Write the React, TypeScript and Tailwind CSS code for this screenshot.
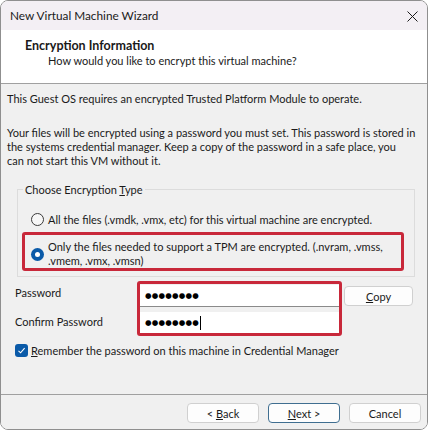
import React from "react";

const font = { fontFamily: 'Lato, "Noto Sans", sans-serif' };

function Radio({ checked }: { checked?: boolean }) {
  return checked ? (
    <span className="w-[13px] h-[13px] shrink-0 rounded-full bg-[#0a5aa8] flex items-center justify-center">
      <span className="w-[5px] h-[5px] rounded-full bg-white" />
    </span>
  ) : (
    <span className="w-[13px] h-[13px] shrink-0 rounded-full border border-[#3a3a3a] bg-[#f7f7f7]" />
  );
}

function Dots({ caret }: { caret?: boolean }) {
  return (
    <div className="flex items-center h-full pl-[5px]">
      <span className="text-[7.5px] tracking-[0.2px] leading-none text-black" style={{ fontFamily: '"DejaVu Sans", sans-serif' }}>
        ●●●●●●●●
      </span>
      {caret && <span className="w-[1px] h-[14px] bg-black ml-[1px]" />}
    </div>
  );
}

function Button({ children, primary }: { children: React.ReactNode; primary?: boolean }) {
  return (
    <button
      className={
        primary
          ? "w-[72px] h-[20px] rounded-[4px] border border-[#3f6e90] bg-[#fdfdfd] text-[11px] leading-none"
          : "w-[72px] h-[20px] rounded-[4px] border border-[#d0d0d0] bg-[#fdfdfd] text-[11px] leading-none"
      }
    >
      {children}
    </button>
  );
}

export default function App() {
  return (
    <div className="w-[428px] h-[430px] bg-white text-[#1a1a1a] text-[11px]" style={font}>
      <div className="w-[428px] h-[430px] rounded-[8px] border border-[#8f8f8f] overflow-hidden flex flex-col">
        {/* title bar */}
        <div className="h-[29px] shrink-0 bg-[#f3eff4] flex items-center justify-between pl-[9px] pr-[9px]">
          <span className="leading-[15px] text-[11.8px]">New Virtual Machine Wizard</span>
          <svg width="11" height="11" viewBox="0 0 11 11" className="mt-[1px]">
            <path d="M0.5 0.5 L10.5 10.5 M10.5 0.5 L0.5 10.5" stroke="#1a1a1a" strokeWidth="1" />
          </svg>
        </div>

        {/* header */}
        <div className="h-[54px] shrink-0 bg-white border-b border-[#a0a0a0] pt-[8px] pl-[24px]">
          <div className="font-bold leading-[15px] text-[12.5px]">Encryption Information</div>
          <div className="leading-[15px] pl-[23px]">How would you like to encrypt this virtual machine?</div>
        </div>

        {/* body */}
        <div className="h-[310px] shrink-0 bg-[#f0f0f0] pl-[6px] pr-[6px] pt-[7px]">
          <div className="leading-[15px] whitespace-nowrap">This Guest OS requires an encrypted Trusted Platform Module to operate.</div>
          <div className="mt-[20px] leading-[14px] whitespace-nowrap">
            Your files will be encrypted using a password you must set. This password is stored in
            <br />
            the systems credential manager. Keep a copy of the password in a safe place, you
            <br />
            can not start this VM without it.
          </div>

          <fieldset className="mt-[14px] ml-[10px] mr-[6px] border border-[#dcdcdc] pb-[5px]">
            <legend className="ml-[5px] px-[2px] leading-[15px]">
              Choose Encryption <span className="underline">T</span>ype
            </legend>
            <div className="mt-[15px] pl-[13px] flex items-center gap-[4px] leading-[15px] whitespace-nowrap">
              <Radio />
              <span>All the files (.vmdk, .vmx, etc) for this virtual machine are encrypted.</span>
            </div>
            <div className="mt-[5px] ml-[4px] mr-[10px] border-[3px] border-[#c8283a] rounded-[3px] pt-[5px] pl-[6px] flex items-center gap-[4px]">
              <Radio checked />
              <span className="leading-[14px] whitespace-nowrap">
                Only the files needed to support a TPM are encrypted. (.nvram, .vmss,
                <br />
                .vmem, .vmx, .vmsn)
              </span>
            </div>
          </fieldset>

          <div className="mt-[4px] flex items-start">
            <div className="w-[130px] pl-[8px] pt-[4px] leading-[15px]">
              <div>Password</div>
              <div className="mt-[14px]">Confirm Password</div>
            </div>
            <div className="w-[205px] border-[3px] border-[#c8283a] rounded-[3px] pt-[1px] flex flex-col gap-[5px]">
              <div className="h-[22px] bg-white border-b border-[#8a8a8a]">
                <Dots />
              </div>
              <div className="h-[21px] bg-white">
                <Dots caret />
              </div>
            </div>
            <div className="ml-[2px] mt-[5px] w-[69px] h-[20px] rounded-[4px] border border-[#d0d0d0] bg-[#fdfdfd] flex items-center justify-center leading-none">
              <span>
                <span className="underline">C</span>opy
              </span>
            </div>
          </div>

          <div className="mt-[7px] ml-[8px] flex items-center gap-[3px] leading-[15px]">
            <span className="w-[13px] h-[13px] rounded-[3px] bg-[#0a5aa8] flex items-center justify-center">
              <svg width="9" height="9" viewBox="0 0 9 9">
                <path d="M1.5 4.8 L3.6 6.8 L7.6 2.2" stroke="white" strokeWidth="1.1" fill="none" />
              </svg>
            </span>
            <span>
              <span className="underline">R</span>emember the password on this machine in Credential Manager
            </span>
          </div>
        </div>

        {/* footer */}
        <div className="flex-1 bg-[#f0f0f0] border-t border-[#a0a0a0] flex justify-end items-start gap-[9px] pt-[8px] pr-[6px]">
          <Button>
            &lt; <span className="underline">B</span>ack
          </Button>
          <Button primary>
            <span className="underline">N</span>ext &gt;
          </Button>
          <Button>Cancel</Button>
        </div>
      </div>
    </div>
  );
}
